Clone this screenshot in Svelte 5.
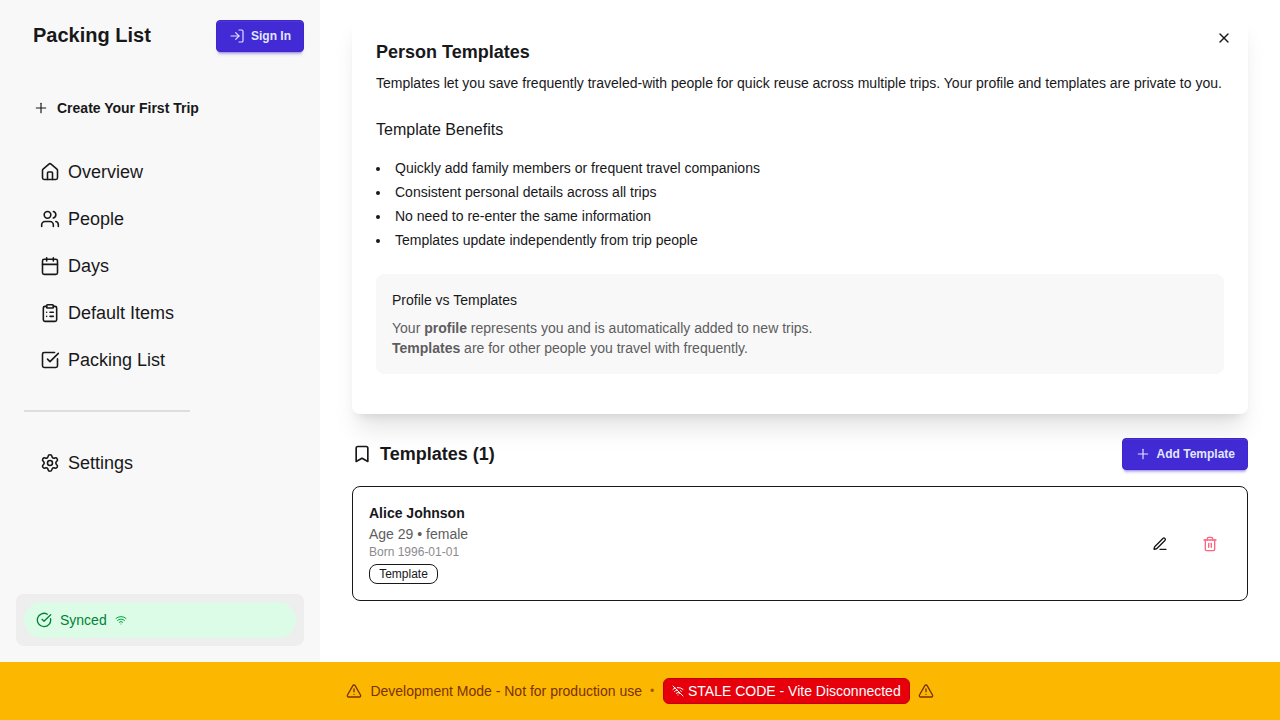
<script>
  const icons = {
    login: ['m10 17 5-5-5-5', 'M15 12H3', 'M15 3h4a2 2 0 0 1 2 2v14a2 2 0 0 1-2 2h-4'],
    plus: ['M5 12h14', 'M12 5v14'],
    x: ['M18 6 6 18', 'm6 6 12 12'],
    house: [
      'M15 21v-8a1 1 0 0 0-1-1h-4a1 1 0 0 0-1 1v8',
      'M3 10a2 2 0 0 1 .709-1.528l7-5.999a2 2 0 0 1 2.582 0l7 5.999A2 2 0 0 1 21 10v9a2 2 0 0 1-2 2H5a2 2 0 0 1-2-2z'
    ],
    users: [
      'M16 21v-2a4 4 0 0 0-4-4H6a4 4 0 0 0-4 4v2',
      'M16 3.128a4 4 0 0 1 0 7.744',
      'M22 21v-2a4 4 0 0 0-3-3.87',
      'M5 7a4 4 0 1 0 8 0a4 4 0 1 0-8 0'
    ],
    calendar: [
      'M8 2v4',
      'M16 2v4',
      'M5 4h14a2 2 0 0 1 2 2v14a2 2 0 0 1-2 2H5a2 2 0 0 1-2-2V6a2 2 0 0 1 2-2z',
      'M3 10h18'
    ],
    clipboard: [
      'M9 2h6a1 1 0 0 1 1 1v2a1 1 0 0 1-1 1H9a1 1 0 0 1-1-1V3a1 1 0 0 1 1-1z',
      'M16 4h2a2 2 0 0 1 2 2v14a2 2 0 0 1-2 2H6a2 2 0 0 1-2-2V6a2 2 0 0 1 2-2h2',
      'M12 11h4',
      'M12 16h4',
      'M8 11h.01',
      'M8 16h.01'
    ],
    check: ['M21 10.5V19a2 2 0 0 1-2 2H5a2 2 0 0 1-2-2V5a2 2 0 0 1 2-2h12.5', 'm9 11 3 3L22 4'],
    circleCheck: ['M21.801 10A10 10 0 1 1 17 3.335', 'm9 11 3 3L22 4'],
    settings: [
      'M9.671 4.136a2.34 2.34 0 0 1 4.659 0 2.34 2.34 0 0 0 3.319 1.915 2.34 2.34 0 0 1 2.33 4.033 2.34 2.34 0 0 0 0 3.831 2.34 2.34 0 0 1-2.33 4.033 2.34 2.34 0 0 0-3.319 1.915 2.34 2.34 0 0 1-4.659 0 2.34 2.34 0 0 0-3.32-1.915 2.34 2.34 0 0 1-2.33-4.033 2.34 2.34 0 0 0 0-3.831A2.34 2.34 0 0 1 6.35 6.051a2.34 2.34 0 0 0 3.319-1.915',
      'M9 12a3 3 0 1 0 6 0a3 3 0 1 0-6 0'
    ],
    wifi: ['M12 20h.01', 'M2 8.82a15 15 0 0 1 20 0', 'M5 12.859a10 10 0 0 1 14 0', 'M8.5 16.429a5 5 0 0 1 7 0'],
    wifiOff: [
      'M12 20h.01',
      'M8.5 16.429a5 5 0 0 1 7 0',
      'M5 12.859a10 10 0 0 1 5.17-2.69',
      'M19 12.859a10 10 0 0 0-2.007-1.523',
      'M2 8.82a15 15 0 0 1 4.177-2.643',
      'M22 8.82a15 15 0 0 0-11.288-3.764',
      'm2 2 20 20'
    ],
    warning: [
      'm21.73 18-8-14a2 2 0 0 0-3.48 0l-8 14A2 2 0 0 0 4 21h16a2 2 0 0 0 1.73-3',
      'M12 9v4',
      'M12 17h.01'
    ],
    bookmark: ['m19 21-7-4-7 4V5a2 2 0 0 1 2-2h10a2 2 0 0 1 2 2v16z'],
    pen: [
      'M12 20h9',
      'M16.376 3.622a1 1 0 0 1 3.002 3.002L7.368 18.635a2 2 0 0 1-.855.506l-2.872.838a.5.5 0 0 1-.62-.62l.838-2.872a2 2 0 0 1 .506-.854z'
    ],
    trash: [
      'M3 6h18',
      'M19 6v14a2 2 0 0 1-2 2H7a2 2 0 0 1-2-2V6',
      'M8 6V4a2 2 0 0 1 2-2h4a2 2 0 0 1 2 2v2',
      'M10 11v6',
      'M14 11v6'
    ]
  };

  const nav = [
    { label: 'Overview', icon: 'house' },
    { label: 'People', icon: 'users' },
    { label: 'Days', icon: 'calendar' },
    { label: 'Default Items', icon: 'clipboard' },
    { label: 'Packing List', icon: 'check' }
  ];

  const benefits = [
    'Quickly add family members or frequent travel companions',
    'Consistent personal details across all trips',
    'No need to re-enter the same information',
    'Templates update independently from trip people'
  ];
</script>

{#snippet icon(name, size = 16, stroke = 2)}
  <svg width={size} height={size} viewBox="0 0 24 24" fill="none" stroke="currentColor" stroke-width={stroke} stroke-linecap="round" stroke-linejoin="round" aria-hidden="true">
    {#each icons[name] as d}<path {d} />{/each}
  </svg>
{/snippet}

<div class="page">
  <div class="columns">
    <aside class="sidebar">
      <header class="brand">
        <h1>Packing List</h1>
        <button class="primary">{@render icon('login', 16, 1.75)}<span>Sign In</span></button>
      </header>
      <button class="create">{@render icon('plus', 16, 1.75)}<span>Create Your First Trip</span></button>
      <nav>
        {#each nav as item}
          <a href="#top">{@render icon(item.icon, 20, 1.9)}<span>{item.label}</span></a>
        {/each}
        <hr />
        <a href="#top">{@render icon('settings', 20, 1.9)}<span>Settings</span></a>
      </nav>
      <div class="status">
        <div class="synced">
          {@render icon('circleCheck')}
          <span>Synced</span>
          <i class="signal">{@render icon('wifi', 12)}</i>
        </div>
      </div>
    </aside>

    <main>
      <section class="intro">
        <button class="close" aria-label="Close">{@render icon('x')}</button>
        <h2>Person Templates</h2>
        <p class="lead">Templates let you save frequently traveled-with people for quick reuse across multiple trips. Your profile and templates are private to you.</p>
        <h3>Template Benefits</h3>
        <ul>
          {#each benefits as benefit}<li>{benefit}</li>{/each}
        </ul>
        <div class="note">
          <h4>Profile vs Templates</h4>
          <p>Your <strong>profile</strong> represents you and is automatically added to new trips.<br /><strong>Templates</strong> are for other people you travel with frequently.</p>
        </div>
      </section>

      <div class="heading">
        <h2>{@render icon('bookmark', 20)}<span>Templates (1)</span></h2>
        <button class="primary">{@render icon('plus', 16, 1.75)}<span>Add Template</span></button>
      </div>

      <article class="person">
        <div>
          <h3>Alice Johnson</h3>
          <p class="age">Age 29 • female</p>
          <p class="born">Born 1996-01-01</p>
          <span class="badge">Template</span>
        </div>
        <div class="actions">
          <button aria-label="Edit">{@render icon('pen')}</button>
          <button class="delete" aria-label="Delete">{@render icon('trash')}</button>
        </div>
      </article>
    </main>
  </div>

  <footer>
    {@render icon('warning')}
    <span class="mode">Development Mode - Not for production use</span>
    <span class="dot">•</span>
    <span class="stale">{@render icon('wifiOff', 12)}<span>STALE CODE - Vite Disconnected</span></span>
    {@render icon('warning')}
  </footer>
</div>

<style>
  :global(body) { margin: 0; overflow: hidden; }
  .page, .page * { box-sizing: border-box; }
  .page {
    display: flex;
    flex-direction: column;
    width: 1280px;
    height: 720px;
    background: #fff;
    color: #18181b;
    font: 14px/20px "Liberation Sans", Arial, sans-serif;
  }
  h1, h2, h3, h4, p, ul { margin: 0; padding: 0; font-size: inherit; font-weight: inherit; }
  svg { display: block; flex: none; }
  span { white-space: nowrap; }
  button { font: inherit; color: inherit; background: none; border: 0; padding: 0; margin: 0; }
  .columns { display: flex; height: 662px; }

  .sidebar { display: flex; flex-direction: column; width: 320px; padding: 16px; background: #f8f8f8; }
  .brand { display: flex; justify-content: space-between; align-items: flex-start; height: 76px; padding: 4px 0 0 17px; }
  .brand h1 { font-size: 20px; font-weight: 700; line-height: 30px; }
  .primary {
    display: flex;
    align-items: center;
    gap: 6px;
    height: 32px;
    padding: 0 12px;
    border: 1px solid #3f28cb;
    border-radius: 4px;
    background: #422ad5;
    color: #e0e7ff;
    font-size: 12px;
    font-weight: 700;
    box-shadow: inset 0 1px 0 rgba(255, 255, 255, .06), 0 3px 2px -2px rgba(66, 42, 213, .3), 0 4px 3px -2px rgba(66, 42, 213, .3);
  }
  .create { display: flex; align-items: center; gap: 8px; height: 32px; padding-left: 17px; font-weight: 700; }
  nav { display: flex; flex-direction: column; padding-top: 24px; }
  nav a { display: flex; align-items: center; gap: 8px; height: 47px; padding-left: 24px; color: inherit; font-size: 18px; line-height: 28px; text-decoration: none; }
  hr { width: 166px; height: 2px; margin: 27px 0 27px 8px; border: 0; background: #dedede; }
  .status { height: 52px; margin-top: auto; padding: 8px; border-radius: 8px; background: #eee; }
  .synced { display: flex; align-items: center; gap: 8px; height: 36px; padding: 0 12px; border-radius: 18px; background: #dcfce7; color: #008236; }
  .signal { color: #00a63e; }

  main { width: 960px; padding: 14px 32px 0; overflow: hidden; }
  .intro { position: relative; height: 400px; padding: 24px; border-radius: 8px; background: #fff; box-shadow: 0 20px 25px -5px rgba(0, 0, 0, .1), 0 8px 10px -6px rgba(0, 0, 0, .1); }
  .close { position: absolute; top: 8px; right: 8px; display: grid; place-items: center; width: 32px; height: 32px; }
  .intro h2 { font-size: 18px; font-weight: 700; line-height: 28px; }
  .lead { margin-top: 7px; white-space: nowrap; }
  .intro h3 { margin-top: 25px; font-size: 16px; line-height: 24px; }
  ul { margin-top: 14px; list-style: none; }
  li { display: flex; align-items: center; gap: 15px; height: 24px; }
  li::before { content: ""; width: 4px; height: 4px; border-radius: 50%; background: currentColor; margin-top: 2px; }
  .note { height: 100px; margin-top: 22px; padding: 16px; border-radius: 8px; background: #f8f8f8; }
  .note p { margin-top: 8px; color: #5d5d5f; }

  .heading { display: flex; justify-content: space-between; align-items: center; height: 32px; margin-top: 24px; }
  .heading h2 { display: flex; align-items: center; gap: 8px; font-size: 18px; font-weight: 700; line-height: 28px; }
  .person { display: flex; justify-content: space-between; align-items: center; height: 115px; margin-top: 16px; padding: 16px; border: 1px solid #18181b; border-radius: 8px; }
  .person h3 { font-weight: 700; line-height: 21px; }
  .age { color: #5d5d5f; }
  .born { color: #8b8b8d; font-size: 12px; line-height: 16px; }
  .badge { display: flex; align-items: center; justify-content: center; width: 69px; height: 20px; margin-top: 4px; border: 1px solid #18181b; border-radius: 8px; font-size: 12px; line-height: 16px; }
  .actions { display: flex; gap: 8px; }
  .actions button { display: grid; place-items: center; width: 42px; height: 32px; }
  .delete { color: #ff637d; }

  footer { display: flex; justify-content: center; align-items: center; gap: 8px; height: 58px; background: #fcb700; color: #793205; }
  .mode { margin-left: .4px; }
  .dot { margin-right: .8px; font-size: 12px; opacity: .7; }
  .stale { display: flex; align-items: center; gap: 4px; width: 247px; height: 26px; padding: 0 8px; border: 1px solid #c10007; border-radius: 6px; background: #e7000b; color: #fff; }
</style>
